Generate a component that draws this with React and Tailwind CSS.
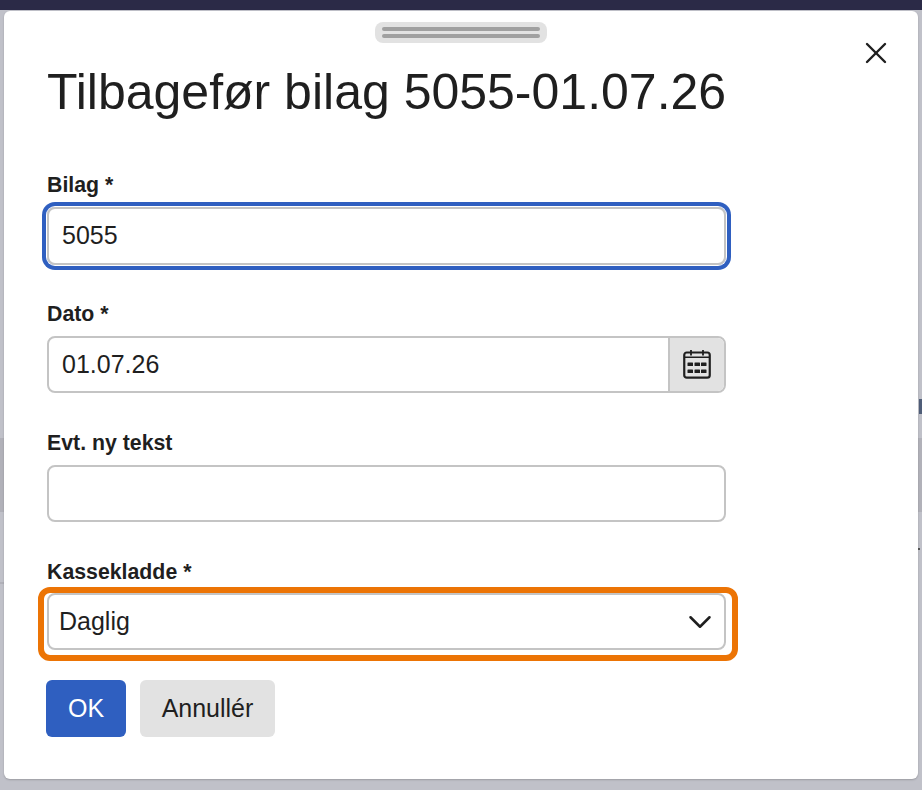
import { X, ChevronDown } from 'lucide-react';

function CalendarIcon() {
  return (
    <svg width="28" height="30" viewBox="0 0 28 30" fill="none" stroke="#1f1f1f" strokeWidth="2.2">
      <rect x="1.25" y="2.5" width="25.5" height="25.2" rx="2.5" />
      <path d="M1.25 7.2h25.5" strokeWidth="1.6" />
      <path d="M8 0v5.5M20 0v5.5" strokeWidth="1.8" />
      <g stroke="none" fill="#1f1f1f">
        <rect x="4.5" y="12.5" width="5.5" height="3.4" rx="0.5" />
        <rect x="11.5" y="12.5" width="5.5" height="3.4" rx="0.5" />
        <rect x="18" y="12.5" width="5.5" height="3.4" rx="0.5" />
        <rect x="4.5" y="19.5" width="5.5" height="3.4" rx="0.5" />
        <rect x="11.5" y="19.5" width="5.5" height="3.4" rx="0.5" />
        <rect x="18" y="19.5" width="5.5" height="3.4" rx="0.5" />
      </g>
    </svg>
  );
}

export default function App() {
  return (
    <div className="w-[922px] h-[790px] flex flex-col bg-[#c0c1c9] overflow-hidden font-['Liberation_Sans',Arial,sans-serif] text-[#1f1f1f]">
      <div className="h-[10px] shrink-0 bg-[#2b2a47]" />
      <div className="flex flex-1">
        {/* Dimmed page behind the modal */}
        <div className="w-[4px] flex flex-col">
          <div className="h-[428px]" />
          <div className="h-[74px] bg-[#b1b1b9]" />
          <div className="h-[70px]" />
          <div className="h-[2px] bg-[#b1b1b9]" />
        </div>
        <div className="relative w-[914px] mt-[1px] h-[768px] bg-white rounded-[6px] pl-[43px] shadow-[0_1px_2px_rgba(0,0,0,0.2)]">
          {/* Drag handle */}
          <div className="absolute left-[371px] top-[11px] w-[172px] h-[21px] rounded-[8px] bg-[#e2e2e2] flex flex-col items-center justify-center gap-[3px]">
            <div className="w-[158px] h-[4px] rounded-full bg-[#a0a0a0]" />
            <div className="w-[158px] h-[4px] rounded-full bg-[#a0a0a0]" />
          </div>
          <button className="absolute right-[24px] top-[24px] text-[#1f1f1f]">
            <X size={36} strokeWidth={1.6} />
          </button>

          <h1 className="pt-[50px] text-[50px] leading-[62px] font-normal">Tilbagefør bilag 5055-01.07.26</h1>

          <label className="block mt-[48px] text-[21.3px] leading-[28px] font-bold">Bilag *</label>
          <div className="mt-[8px] w-[679px] h-[58px] flex items-center px-[13px] text-[25px] rounded-[8px] border-2 border-[#c4c4c4] ring-[4px] ring-offset-[1px] ring-[#2f5fc0]">5055</div>

          <label className="block mt-[35px] text-[21.3px] leading-[28px] font-bold">Dato *</label>
          <div className="mt-[8px] w-[679px] h-[57px] flex rounded-[8px] border-2 border-[#c4c4c4] overflow-hidden">
            <div className="flex-1 flex items-center px-[13px] text-[25px]">01.07.26</div>
            <div className="w-[56px] flex items-center justify-center bg-[#e2e2e2] border-l-2 border-[#c4c4c4]">
              <CalendarIcon />
            </div>
          </div>

          <label className="block mt-[36px] text-[21.3px] leading-[28px] font-bold">Evt. ny tekst</label>
          <div className="mt-[8px] w-[679px] h-[57px] rounded-[8px] border-2 border-[#c4c4c4]" />

          <label className="block mt-[36px] text-[21.3px] leading-[28px] font-bold">Kassekladde *</label>
          <div className="relative mt-[7px] w-[679px] h-[57px] flex items-center justify-between pl-[10px] pr-[5px] text-[25px] rounded-[8px] border-2 border-[#c4c4c4]">
            <span className="pt-[1px]">Daglig</span>
            <ChevronDown size={38} strokeWidth={1.6} />
            {/* Orange highlight drawn on top of the select */}
            <div className="absolute -left-[11px] -right-[14px] -top-[8px] -bottom-[13px] rounded-[12px] border-[6px] border-[#ec7405]" />
          </div>

          <div className="mt-[30px] -ml-[1px] flex gap-[14px]">
            <button className="w-[80px] h-[57px] rounded-[6px] bg-[#2f5fc0] text-white text-[25px]">OK</button>
            <button className="w-[135px] h-[57px] rounded-[6px] bg-[#e2e2e2] text-[25px]">Annullér</button>
          </div>
        </div>
        <div className="w-[4px] flex flex-col">
          <div className="h-[389px]" />
          <div className="h-[15px] w-[3px] ml-auto bg-[#4f5d78]" />
          <div className="h-[24px]" />
          <div className="h-[74px] bg-[#b1b1b9]" />
          <div className="h-[36px]" />
          <div className="h-[2px] w-[2px] bg-[#555555]" />
        </div>
      </div>
    </div>
  );
}
